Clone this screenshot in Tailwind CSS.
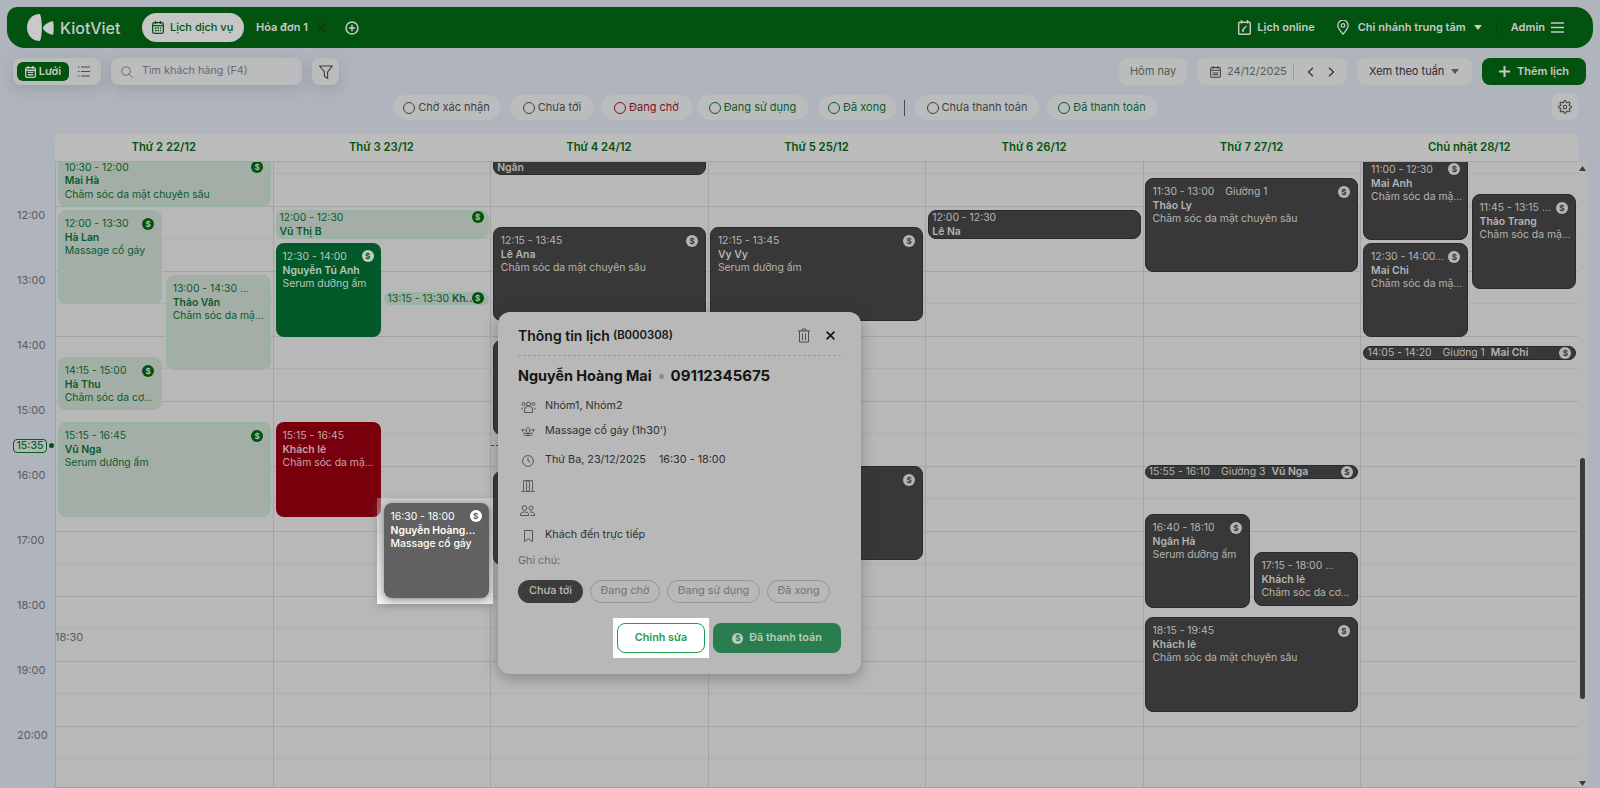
<!DOCTYPE html>
<html lang="vi">
<head>
<meta charset="utf-8">
<title>KiotViet</title>
<script src="https://cdn.jsdelivr.net/npm/@tailwindcss/browser@4"></script>
</head>
<body class="w-[1600px] h-[788px] overflow-hidden relative bg-[#b0b4bc] font-['Inter','Liberation_Sans',sans-serif] text-[#2e2e2e]">

<!-- top bar -->
<header class="mt-[7px] mx-[7px] h-[41px] rounded-[18px] rounded-tl-[10px] bg-[#02530f] flex items-center text-[#c6c8c6] font-semibold text-[11px] whitespace-nowrap">
  <svg class="ml-[20px] w-[27px] h-[27px]" viewBox="0 0 27 27" fill="#c9c9c9"><path d="M13 0C5 0 0 6 0 13.500S5 27 13 27C15.500 22 15.500 5 13 0z"/><path d="M26 7C22 8 16 11 16 14S22 20 26 21C27 17 27 11 26 7z"/></svg>
  <span class="ml-[6px] w-[60px] text-[16px] font-medium text-[#c9c9c9]">KiotViet</span>
  <div class="ml-[22px] w-[102px] h-[29px] rounded-full bg-[#c6c6c6] flex items-center pl-[10px] gap-[6px] text-[#02530f]">
    <svg class="w-[12px] h-[13px]" viewBox="0 0 12 13" fill="none" stroke="#02530f" stroke-width="1.3"><rect x=".7" y="1.7" width="10.6" height="10.6" rx="1.5"/><path d="M3.5 0v3M8.500 0v3M1 4.600h10"/><path d="M3 7h6M3 9.500h6" stroke-dasharray="1.500 1"/></svg>
    <span class="font-medium">Lịch dịch vụ</span>
  </div>
  <span class="ml-[12px] text-[#c9c9c9]">Hóa đơn 1</span>
  <svg class="ml-[9px] w-[9px] h-[9px]" viewBox="0 0 9 9" stroke="#0d3a16" stroke-width="1.200"><path d="M.5.5l8 8M8.500.5l-8 8"/></svg>
  <svg class="ml-[19px] w-[14px] h-[14px]" viewBox="0 0 14 14" fill="none" stroke="#c9c9c9" stroke-width="1.500"><circle cx="7" cy="7" r="6"/><path d="M7 3.800v6.400M3.800 7h6.400"/></svg>
  <div class="ml-auto flex items-center pr-[29px]">
    <svg class="w-[13px] h-[15px]" viewBox="0 0 13 15" fill="none" stroke="#c9c9c9" stroke-width="1.400"><rect x=".7" y="2.200" width="11.600" height="12" rx="1"/><path d="M3.500 0v3.500M9.500 0v3.500M4.500 10l4-4M4 11h2"/></svg>
    <span class="ml-[6px]">Lịch online</span>
    <svg class="ml-[22px] w-[12px] h-[15px]" viewBox="0 0 12 15" fill="none" stroke="#c9c9c9" stroke-width="1.300"><path d="M6 14.200C3 10.500 .8 8 .8 5.400a5.200 5.200 0 0 1 10.400 0C11.200 8 9 10.500 6 14.200z"/><circle cx="6" cy="5.400" r="1.800"/></svg>
    <span class="ml-[9px]">Chi nhánh trung tâm</span>
    <svg class="ml-[8px] w-[8px] h-[5px]" viewBox="0 0 8 5" fill="#c9c9c9"><path d="M0 0h8L4 5z"/></svg>
    <span class="ml-[14px] w-px h-[14px] bg-[#0f3d1a]"></span>
    <span class="ml-[14px]">Admin</span>
    <svg class="ml-[6px] w-[13px] h-[11px]" viewBox="0 0 13 11" stroke="#c9c9c9" stroke-width="1.500"><path d="M0 1h13M0 5.500h13M0 10h13"/></svg>
  </div>
</header>

<!-- toolbar -->
<div class="mt-[10px] ml-[13px] mr-[14px] h-[27px] flex items-center text-[11px] text-[#4c4c4c] whitespace-nowrap">
  <div class="w-[88px] h-[27px] rounded-lg bg-[#bbbcbe] flex items-center pl-[4px] shadow-[0_4px_14px_rgba(90,95,105,0.25)]">
    <div class="w-[52px] h-[19px] rounded-md bg-[#02530f] flex items-center justify-center gap-[3px] text-[#c9c9c9] font-semibold">
      <svg class="w-[11px] h-[12px]" viewBox="0 0 12 13" fill="none" stroke="#c9c9c9" stroke-width="1.400"><rect x=".7" y="1.700" width="10.600" height="10.600" rx="1.500"/><path d="M3.500 0v3M8.500 0v3M1 4.600h10M3 7h6M3 9.500h6"/></svg>
      <span>Lưới</span>
    </div>
    <svg class="ml-[9px] w-[12px] h-[11px]" viewBox="0 0 12 11" stroke="#4c4c4c" stroke-width="1.200"><path d="M3 1h9M3 5.500h9M3 10h9M0 1h1.500M0 5.500h1.500M0 10h1.500"/></svg>
  </div>
  <div class="ml-[10px] w-[191px] h-[27px] rounded-lg bg-[#bbbcbe] flex items-center pl-[10px] gap-[9px] text-[#6a6a6a] text-[10.800px] shadow-[0_4px_14px_rgba(90,95,105,0.25)]">
    <svg class="w-[12px] h-[12px]" viewBox="0 0 12 12" fill="none" stroke="#6a6a6a" stroke-width="1"><circle cx="5" cy="5" r="4.300"/><path d="M8.200 8.200L11.700 11.700"/></svg>
    <span>Tìm khách hàng (F4)</span>
  </div>
  <div class="ml-[10px] w-[27px] h-[27px] rounded-lg bg-[#bbbcbe] flex items-center justify-center shadow-[0_4px_14px_rgba(90,95,105,0.25)]">
    <svg class="w-[14px] h-[14px]" viewBox="0 0 14 14" fill="none" stroke="#3c3c3c" stroke-width="1.100"><path d="M.7 1h12.600L8.600 7v6.300L5.400 11.500V7z"/></svg>
  </div>
  <div class="ml-auto flex items-center">
    <div class="w-[68px] h-[27px] rounded-lg bg-[#bbbcbe] flex items-center justify-center text-[#4f6052]">Hôm nay</div>
    <div class="ml-[10px] w-[150px] h-[27px] rounded-lg bg-[#bbbcbe] flex items-center pl-[13px] text-[#4f6052]">
      <svg class="w-[11px] h-[12px]" viewBox="0 0 12 13" fill="none" stroke="#3c3c3c" stroke-width="1.100"><rect x=".7" y="1.700" width="10.600" height="10.600" rx="1.500"/><path d="M3.500 0v3M8.500 0v3M1 4.600h10M3 7.500h6M3 9.500h6"/></svg>
      <span class="ml-[6px]">24/12/2025</span>
      <span class="ml-[6px] w-px h-[16px] bg-[#9a9a9a]"></span>
      <svg class="ml-[13px] w-[7px] h-[10px]" viewBox="0 0 7 10" fill="none" stroke="#3c3c3c" stroke-width="1.400"><path d="M6 .7L1.500 5 6 9.300"/></svg>
      <svg class="ml-[14px] w-[7px] h-[10px]" viewBox="0 0 7 10" fill="none" stroke="#3c3c3c" stroke-width="1.400"><path d="M1 .7L5.500 5 1 9.300"/></svg>
    </div>
    <div class="ml-[10px] w-[115px] h-[27px] rounded-lg bg-[#bbbcbe] flex items-center pl-[12px] text-[#2a2a2a]">
      <span>Xem theo tuần</span>
      <svg class="ml-[7px] w-[8px] h-[5px]" viewBox="0 0 8 5" fill="#555"><path d="M0 0h8L4 5z"/></svg>
    </div>
    <div class="ml-[10px] w-[104px] h-[27px] rounded-lg bg-[#02530f] flex items-center justify-center gap-[7px] text-[#c9c9c9] font-semibold text-[11px]">
      <svg class="w-[11px] h-[11px]" viewBox="0 0 11 11" stroke="#c9c9c9" stroke-width="2"><path d="M5.500 0v11M0 5.500h11"/></svg>
      <span>Thêm lịch</span>
    </div>
  </div>
</div>

<!-- status filters -->
<div class="mt-[8px] h-[27px] flex items-end text-[11px] whitespace-nowrap">
  <div class="ml-[393px] w-[107px] h-[25px] rounded-full bg-[#bbbcbe] flex items-center justify-center gap-[3px] text-[#3f3f3f]"><span class="w-[12px] h-[12px] rounded-full border border-[#3f3f3f]"></span>Chờ xác nhận</div>
  <div class="ml-[10px] w-[84px] h-[25px] rounded-full bg-[#bbbcbe] flex items-center justify-center gap-[3px] text-[#3f3f3f]"><span class="w-[12px] h-[12px] rounded-full border border-[#3f3f3f]"></span>Chưa tới</div>
  <div class="ml-[7px] w-[91px] h-[25px] rounded-full bg-[#bbbcbe] flex items-center justify-center gap-[3px] text-[#7a1020]"><span class="w-[12px] h-[12px] rounded-full border border-[#7a1020]"></span>Đang chờ</div>
  <div class="ml-[5px] w-[111px] h-[25px] rounded-full bg-[#bbbcbe] flex items-center justify-center gap-[3px] text-[#0b5a2c]"><span class="w-[12px] h-[12px] rounded-full border border-[#0b5a2c]"></span>Đang sử dụng</div>
  <div class="ml-[10px] w-[78px] h-[25px] rounded-full bg-[#bbbcbe] flex items-center justify-center gap-[3px] text-[#0b5a2c]"><span class="w-[12px] h-[12px] rounded-full border border-[#0b5a2c]"></span>Đã xong</div>
  <span class="ml-[8px] mb-[4px] w-px h-[16px] bg-[#4c4c4c]"></span>
  <div class="ml-[10px] w-[124px] h-[25px] rounded-full bg-[#bbbcbe] flex items-center justify-center gap-[3px] text-[#3f3f3f]"><span class="w-[12px] h-[12px] rounded-full border border-[#3f3f3f]"></span>Chưa thanh toán</div>
  <div class="ml-[8px] w-[110px] h-[25px] rounded-full bg-[#bbbcbe] flex items-center justify-center gap-[3px] text-[#0b5a2c]"><span class="w-[12px] h-[12px] rounded-full border border-[#0b5a2c]"></span>Đã thanh toán</div>
  <div class="ml-auto mr-[22px] w-[26px] h-[27px] rounded-lg bg-[#bbbcbe] flex items-center justify-center">
    <svg class="w-[14px] h-[14px]" viewBox="0 0 24 24" fill="none" stroke="#3c3c3c" stroke-width="1.800"><circle cx="12" cy="12" r="3"/><path d="M19.400 15a1.650 1.650 0 0 0 .33 1.820l.06.06a2 2 0 1 1-2.830 2.830l-.06-.06a1.650 1.650 0 0 0-2.820 1.170V21a2 2 0 1 1-4 0v-.09a1.650 1.650 0 0 0-2.900-1.170l-.06.06a2 2 0 1 1-2.830-2.830l.06-.06A1.650 1.650 0 0 0 3.090 14H3a2 2 0 1 1 0-4h.09a1.650 1.650 0 0 0 1.170-2.900l-.06-.06A2 2 0 1 1 7.030 4.210l.06.06A1.650 1.650 0 0 0 10 3.090V3a2 2 0 1 1 4 0v.09a1.650 1.650 0 0 0 2.820 1.170l.06-.06a2 2 0 1 1 2.830 2.830l-.06.06A1.650 1.650 0 0 0 20.910 10H21a2 2 0 1 1 0 4h-.09a1.650 1.650 0 0 0-1.510 1z"/></svg>
  </div>
</div>

<!-- day headings -->
<div class="mt-[14px] ml-[55px] w-[1523px] h-[28px] rounded-t-md bg-[#bcbcbc] border-b border-[#a4a4a4] grid grid-cols-7 text-[11.300px] font-semibold text-[#02530f] text-center leading-[26px]">
  <div>Thứ 2 22/12</div><div>Thứ 3 23/12</div><div>Thứ 4 24/12</div><div>Thứ 5 25/12</div><div>Thứ 6 26/12</div><div>Thứ 7 27/12</div><div>Chủ nhật 28/12</div>
</div>

<!-- calendar -->
<div class="flex h-[626px] text-[10.400px] leading-[13.500px] whitespace-nowrap">
  <!-- hours -->
  <div class="relative w-[55px] shrink-0 text-[#5c5c5c] text-[11px]">
    <div class="pl-[17px] pt-[47px] flex flex-col">
      <div class="h-[65px]">12:00</div><div class="h-[65px]">13:00</div><div class="h-[65px]">14:00</div><div class="h-[65px]">15:00</div><div class="h-[65px]">16:00</div><div class="h-[65px]">17:00</div><div class="h-[65px]">18:00</div><div class="h-[65px]">19:00</div><div class="h-[65px]">20:00</div>
    </div>
    <div class="absolute left-[13px] top-[277px] w-[34px] h-[14px] rounded-[4px] border border-[#0b5a2c] bg-[#b0bab4] text-[#0b5a2c] font-medium text-[10.500px] text-center leading-[12px]">15:35</div>
    <div class="absolute left-[49px] top-[281px] w-[5px] h-[5px] rounded-full bg-[#02530f]"></div>
  </div>

  <!-- body -->
  <div class="relative w-[1532px] bg-[#b8b8b8] overflow-hidden border-b border-[#a4a4a4]">
    <!-- lines -->
    <div class="absolute left-0 top-0 w-[1523px] flex flex-col">
      <div class="h-[12px] border-b border-dotted border-[#a4a4a4]"></div>
      <div class="h-[32.500px] border-b border-[#a4a4a4]"></div>
      <div class="h-[32.500px] border-b border-dotted border-[#a4a4a4]"></div>
      <div class="h-[32.500px] border-b border-[#a4a4a4]"></div>
      <div class="h-[32.500px] border-b border-dotted border-[#a4a4a4]"></div>
      <div class="h-[32.500px] border-b border-[#a4a4a4]"></div>
      <div class="h-[32.500px] border-b border-dotted border-[#a4a4a4]"></div>
      <div class="h-[32.500px] border-b border-[#a4a4a4]"></div>
      <div class="h-[32.500px] border-b border-dotted border-[#a4a4a4]"></div>
      <div class="h-[32.500px] border-b border-[#a4a4a4]"></div>
      <div class="h-[32.500px] border-b border-dotted border-[#a4a4a4]"></div>
      <div class="h-[32.500px] border-b border-[#a4a4a4]"></div>
      <div class="h-[32.500px] border-b border-dotted border-[#a4a4a4]"></div>
      <div class="h-[32.500px] border-b border-[#a4a4a4]"></div>
      <div class="h-[32.500px] border-b border-dotted border-[#a4a4a4]"></div>
      <div class="h-[32.500px] border-b border-[#a4a4a4]"></div>
      <div class="h-[32.500px] border-b border-dotted border-[#a4a4a4]"></div>
      <div class="h-[32.500px] border-b border-[#a4a4a4]"></div>
      <div class="h-[32.500px] border-b border-dotted border-[#a4a4a4]"></div>
    </div>
    <span class="absolute left-0 top-[469px] text-[11px] text-[#5c5c5c]">18:30</span>
    <!-- scrollbar -->
    <div class="absolute left-[1523px] top-0 w-[9px] h-full bg-[#b8b8b8]">
      <svg class="absolute left-[1px] top-[4px] w-[7px] h-[5px]" viewBox="0 0 7 5" fill="#3a3a3a"><path d="M3.500 0L7 5H0z"/></svg>
      <div class="absolute left-[2px] top-[296px] w-[5px] h-[241px] rounded bg-[#3a3a3a]"></div>
      <svg class="absolute left-[1px] top-[619px] w-[7px] h-[5px]" viewBox="0 0 7 5" fill="#3a3a3a"><path d="M0 0h7L3.500 5z"/></svg>
    </div>

    <!-- columns -->
    <div class="absolute left-0 top-0 w-[1523px] h-full grid grid-cols-7">

      <!-- Mon -->
      <div class="relative border-l border-[#a4a4a4]">
        <div class="absolute left-[2px] top-[-9px] w-[213px] h-[54px] rounded-lg border border-[#96b5a3] bg-[#a3afa6] text-[#0b5a2c] pl-[5.700px] pt-[6.500px]">10:30 - 12:00<p class="font-semibold">Mai Hà</p><p>Chăm sóc da mặt chuyên sâu</p><span class="absolute right-[7px] top-[7px] w-[12px] h-[12px] rounded-full bg-[#02530f] text-[#b0c0b4] text-[8px] leading-[12px] text-center font-bold">$</span></div>
        <div class="absolute left-[2px] top-[48px] w-[104px] h-[94px] rounded-lg border border-[#96b5a3] bg-[#a3afa6] text-[#0b5a2c] pl-[5.700px] pt-[6px]">12:00 - 13:30<p class="font-semibold">Hà Lan</p><p>Massage cổ gáy</p><span class="absolute right-[7px] top-[7px] w-[12px] h-[12px] rounded-full bg-[#02530f] text-[#b0c0b4] text-[8px] leading-[12px] text-center font-bold">$</span></div>
        <div class="absolute left-[110px] top-[113px] w-[105px] h-[95px] rounded-lg border border-[#96b5a3] bg-[#a3afa6] text-[#0b5a2c] pl-[5.700px] pt-[6px]">13:00 - 14:30 ...<p class="font-semibold">Thảo Vân</p><p>Chăm sóc da mặ...</p></div>
        <div class="absolute left-[2px] top-[195px] w-[104px] h-[53px] rounded-lg border border-[#96b5a3] bg-[#a3afa6] text-[#0b5a2c] pl-[5.700px] pt-[6px]">14:15 - 15:00<p class="font-semibold">Hà Thu</p><p>Chăm sóc da cơ...</p><span class="absolute right-[7px] top-[7px] w-[12px] h-[12px] rounded-full bg-[#02530f] text-[#b0c0b4] text-[8px] leading-[12px] text-center font-bold">$</span></div>
        <div class="absolute left-[2px] top-[260px] w-[213px] h-[95px] rounded-lg border border-[#96b5a3] bg-[#a3afa6] text-[#0b5a2c] pl-[5.700px] pt-[6px]">15:15 - 16:45<p class="font-semibold">Vũ Nga</p><p>Serum dưỡng ấm</p><span class="absolute right-[7px] top-[7px] w-[12px] h-[12px] rounded-full bg-[#02530f] text-[#b0c0b4] text-[8px] leading-[12px] text-center font-bold">$</span></div>
      </div>

      <!-- Tue -->
      <div class="relative border-l border-[#a4a4a4]">
        <div class="absolute left-[2px] top-[48px] w-[213px] h-[29px] rounded-lg border border-[#96b5a3] bg-[#a3afa6] text-[#0b5a2c] pl-[3px] pt-0">12:00 - 12:30<p class="font-semibold">Vũ Thị B</p><span class="absolute right-[4px] top-[0px] w-[12px] h-[12px] rounded-full bg-[#02530f] text-[#b0c0b4] text-[8px] leading-[12px] text-center font-bold">$</span></div>
        <div class="absolute left-[2px] top-[81px] w-[105px] h-[94px] rounded-lg bg-[#025a2b] text-[#b8c6bc] pl-[7px] pt-[7px]">12:30 - 14:00<p class="font-semibold">Nguyễn Tú Anh</p><p>Serum dưỡng ấm</p><span class="absolute right-[7px] top-[7px] w-[12px] h-[12px] rounded-full bg-[#c0cbc4] text-[#025a2b] text-[8px] leading-[12px] text-center font-bold">$</span></div>
        <div class="absolute left-[110px] top-[130px] w-[105px] h-[13px] rounded-full border border-[#96b5a3] bg-[#a3afa6] text-[#0b5a2c] pl-[3px] leading-[11px]">13:15 - 13:30 <span class="font-semibold">Kh...</span><span class="absolute right-[4px] top-[-1px] w-[12px] h-[12px] rounded-full bg-[#02530f] text-[#b0c0b4] text-[8px] leading-[12px] text-center font-bold">$</span></div>
        <div class="absolute left-[2px] top-[260px] w-[105px] h-[95px] rounded-lg bg-[#78000d] text-[#c4a4a8] pl-[7px] pt-[7px]">15:15 - 16:45<p class="font-semibold">Khách lẻ</p><p>Chăm sóc da mặ...</p></div>
        <!-- spotlight -->
        <div class="absolute z-10 left-[103px] top-[336px] w-[116px] h-[106px] bg-linear-to-b from-white/30 to-white/85 shadow-[0_3px_8px_rgba(110,110,110,0.35)]">
          <div class="absolute left-[7px] top-[5px] w-[105px] h-[95px] rounded-lg bg-[#616161] text-white pl-[7px] pt-[7px] shadow-[0_2px_8px_rgba(0,0,0,0.45)]">16:30 - 18:00<p class="font-semibold">Nguyễn Hoàng...</p><p class="font-medium">Massage cổ gáy</p><span class="absolute right-[7px] top-[7px] w-[12px] h-[12px] rounded-full bg-white text-[#616161] text-[8px] leading-[12px] text-center font-bold">$</span></div>
        </div>
      </div>

      <!-- Wed -->
      <div class="relative border-l border-[#a4a4a4]">
        <div class="absolute left-[2px] top-[-30px] w-[213px] h-[43px] rounded-lg border border-[#2a2a2a] bg-[#383838] text-[#b4b4b4] pl-[3px] font-semibold flex items-end">Ngân</div>
        <div class="absolute left-[2px] top-[65px] w-[213px] h-[94px] rounded-lg border border-[#2a2a2a] bg-[#383838] text-[#b4b4b4] pl-[6.700px] pt-[6px]">12:15 - 13:45<p class="font-semibold">Lê Ana</p><p>Chăm sóc da mặt chuyên sâu</p><span class="absolute right-[7px] top-[7px] w-[12px] h-[12px] rounded-full bg-[#b4b4b4] text-[#383838] text-[8px] leading-[12px] text-center font-bold">$</span></div>
        <div class="absolute left-[2px] top-[178px] w-[213px] h-[95px] rounded-lg border border-[#2a2a2a] bg-[#383838]"></div>
        <div class="absolute left-0 top-[283px] w-full border-t border-dashed border-[#0b5a2c]"></div>
        <div class="absolute left-[2px] top-[309px] w-[213px] h-[94px] rounded-lg border border-[#2a2a2a] bg-[#383838]"></div>
      </div>

      <!-- Thu -->
      <div class="relative border-l border-[#a4a4a4]">
        <div class="absolute left-[1.500px] top-[65px] w-[213px] h-[94px] rounded-lg border border-[#2a2a2a] bg-[#383838] text-[#b4b4b4] pl-[6.700px] pt-[6px]">12:15 - 13:45<p class="font-semibold">Vy Vy</p><p>Serum dưỡng ấm</p><span class="absolute right-[7px] top-[7px] w-[12px] h-[12px] rounded-full bg-[#b4b4b4] text-[#383838] text-[8px] leading-[12px] text-center font-bold">$</span></div>
        <div class="absolute left-[1.500px] top-[304px] w-[213px] h-[94px] rounded-lg border border-[#2a2a2a] bg-[#383838]"><span class="absolute right-[7px] top-[7px] w-[12px] h-[12px] rounded-full bg-[#b4b4b4] text-[#383838] text-[8px] leading-[12px] text-center font-bold">$</span></div>
      </div>

      <!-- Fri -->
      <div class="relative border-l border-[#a4a4a4]">
        <div class="absolute left-[2px] top-[48px] w-[213px] h-[29px] rounded-lg border border-[#2a2a2a] bg-[#383838] text-[#b4b4b4] pl-[3px]">12:00 - 12:30<p class="font-semibold">Lê Na</p></div>
      </div>

      <!-- Sat -->
      <div class="relative border-l border-[#a4a4a4]">
        <div class="absolute left-[1px] top-[16px] w-[213px] h-[94px] rounded-lg border border-[#2a2a2a] bg-[#383838] text-[#b4b4b4] pl-[6.700px] pt-[6px]">11:30 - 13:00 <span class="ml-[8px]">Giường 1</span><p class="font-semibold">Thảo Ly</p><p>Chăm sóc da mặt chuyên sâu</p><span class="absolute right-[7px] top-[7px] w-[12px] h-[12px] rounded-full bg-[#b4b4b4] text-[#383838] text-[8px] leading-[12px] text-center font-bold">$</span></div>
        <div class="absolute left-[1px] top-[303px] w-[213px] h-[14px] rounded-full border border-[#2a2a2a] bg-[#383838] text-[#b4b4b4] pl-[3px] leading-[12px]">15:55 - 16:10 <span class="ml-[8px]">Giường 3</span><span class="ml-[6px] font-semibold">Vũ Nga</span><span class="absolute right-[4px] top-0 w-[12px] h-[12px] rounded-full bg-[#b4b4b4] text-[#383838] text-[8px] leading-[12px] text-center font-bold">$</span></div>
        <div class="absolute left-[1px] top-[352px] w-[105px] h-[94px] rounded-lg border border-[#2a2a2a] bg-[#383838] text-[#b4b4b4] pl-[6.700px] pt-[6px]">16:40 - 18:10<p class="font-semibold">Ngân Hà</p><p>Serum dưỡng ấm</p><span class="absolute right-[7px] top-[7px] w-[12px] h-[12px] rounded-full bg-[#b4b4b4] text-[#383838] text-[8px] leading-[12px] text-center font-bold">$</span></div>
        <div class="absolute left-[110px] top-[390px] w-[104px] h-[54px] rounded-lg border border-[#2a2a2a] bg-[#383838] text-[#b4b4b4] pl-[6.700px] pt-[6px]">17:15 - 18:00 ...<p class="font-semibold">Khách lẻ</p><p>Chăm sóc da cơ...</p></div>
        <div class="absolute left-[1px] top-[455px] w-[213px] h-[95px] rounded-lg border border-[#2a2a2a] bg-[#383838] text-[#b4b4b4] pl-[6.700px] pt-[6px]">18:15 - 19:45<p class="font-semibold">Khách lẻ</p><p>Chăm sóc da mặt chuyên sâu</p><span class="absolute right-[7px] top-[7px] w-[12px] h-[12px] rounded-full bg-[#b4b4b4] text-[#383838] text-[8px] leading-[12px] text-center font-bold">$</span></div>
      </div>

      <!-- Sun -->
      <div class="relative border-l border-[#a4a4a4]">
        <div class="absolute left-[2px] top-[-9px] w-[105px] h-[87px] rounded-lg border border-[#2a2a2a] bg-[#383838] text-[#b4b4b4] pl-[6.700px] pt-[9px]">11:00 - 12:30<p class="font-semibold">Mai Anh</p><p>Chăm sóc da mặ...</p><span class="absolute right-[7px] top-[9px] w-[12px] h-[12px] rounded-full bg-[#b4b4b4] text-[#383838] text-[8px] leading-[12px] text-center font-bold">$</span></div>
        <div class="absolute left-[2px] top-[81px] w-[105px] h-[94px] rounded-lg border border-[#2a2a2a] bg-[#383838] text-[#b4b4b4] pl-[6.700px] pt-[6px]">12:30 - 14:00...<p class="font-semibold">Mai Chi</p><p>Chăm sóc da mặ...</p><span class="absolute right-[7px] top-[7px] w-[12px] h-[12px] rounded-full bg-[#b4b4b4] text-[#383838] text-[8px] leading-[12px] text-center font-bold">$</span></div>
        <div class="absolute left-[110.500px] top-[32px] w-[104px] h-[95px] rounded-lg border border-[#2a2a2a] bg-[#383838] text-[#b4b4b4] pl-[6.700px] pt-[6px]">11:45 - 13:15 ...<p class="font-semibold">Thảo Trang</p><p>Chăm sóc da mặ...</p><span class="absolute right-[7px] top-[7px] w-[12px] h-[12px] rounded-full bg-[#b4b4b4] text-[#383838] text-[8px] leading-[12px] text-center font-bold">$</span></div>
        <div class="absolute left-[2px] top-[184px] w-[213px] h-[14px] rounded-full border border-[#2a2a2a] bg-[#383838] text-[#b4b4b4] pl-[3px] leading-[12px]">14:05 - 14:20 <span class="ml-[8px]">Giường 1</span><span class="ml-[6px] font-semibold">Mai Chi</span><span class="absolute right-[4px] top-0 w-[12px] h-[12px] rounded-full bg-[#b4b4b4] text-[#383838] text-[8px] leading-[12px] text-center font-bold">$</span></div>
      </div>
    </div>
  </div>
</div>

<!-- booking dialog -->
<div class="absolute z-20 left-[498px] top-[312px] w-[363px] h-[362px] rounded-xl bg-[#b8b8b8] shadow-[0_4px_14px_rgba(40,40,40,0.35)] px-[20px] text-[10.800px] text-[#303030] whitespace-nowrap">
  <div class="h-[44px] pt-[3px] border-b border-dashed border-[#999] flex items-center text-[#151515] font-semibold">
    <span class="text-[14px]">Thông tin lịch</span>
    <span class="ml-[3px] text-[11.300px]">(B000308)</span>
    <svg class="ml-auto mr-[16px] w-[12px] h-[15px]" viewBox="0 0 12 14" fill="none" stroke="#4a4a4a" stroke-width="1"><path d="M0 2.500h12M4 2.500V.6h4v1.900M1.500 2.500v11h9v-11M4.500 5v6.500M7.500 5v6.500"/></svg>
    <svg class="mr-[6px] w-[9px] h-[9px]" viewBox="0 0 9 9" stroke="#151515" stroke-width="1.600"><path d="M.6.6l7.800 7.800M8.400.6L.6 8.400"/></svg>
  </div>
  <div class="mt-[10px] h-[20px] flex items-center font-bold text-[#151515] leading-[20px]">
    <span class="text-[14.400px]">Nguyễn Hoàng Mai</span><span class="ml-[7px] w-[5px] h-[5px] rounded-full bg-[#8c8c8c]"></span><span class="ml-[7px] text-[15px]">09112345675</span>
  </div>
  <div class="mt-[8px] h-[25px] flex items-center">
    <svg class="w-[15px] h-[12px] mr-[9px] ml-[3px]" viewBox="0 0 15 12" fill="none" stroke="#4a4a4a" stroke-width=".9"><circle cx="7.500" cy="3" r="2"/><circle cx="2.500" cy="3" r="1.500"/><circle cx="12.500" cy="3" r="1.500"/><path d="M3.500 11.500V9a4 4 0 0 1 8 0v2.500zM.5 8.500a2 2 0 0 1 2-1.500M14.500 8.500a2 2 0 0 0-2-1.500"/></svg>
    <span>Nhóm1, Nhóm2</span>
  </div>
  <div class="h-[25px] flex items-center">
    <svg class="w-[14px] h-[11px] mr-[10px] ml-[3px]" viewBox="0 0 14 11" fill="none" stroke="#4a4a4a" stroke-width=".9"><path d="M7 .8C5 2.500 5 6 7 8c2-2 2-5.500 0-7.200zM7 8C4 8 1.500 6 .8 3.500 3 3.500 4.500 4 5.300 5M7 8c3 0 5.500-2 6.200-4.500-2.200 0-3.700.5-4.500 1.500M2.500 8.500C4 10.200 10 10.200 11.500 8.500"/></svg>
    <span>Massage cổ gáy (1h30')</span>
  </div>
  <div class="mt-[4px] h-[25px] flex items-center">
    <svg class="w-[12px] h-[12px] mr-[11px] ml-[4px]" viewBox="0 0 12 12" fill="none" stroke="#4a4a4a" stroke-width=".9"><circle cx="6" cy="6" r="5.400"/><path d="M6 2.800V6l2.200 1.500"/></svg>
    <span>Thứ Ba, 23/12/2025</span><span class="ml-[13px]">16:30 - 18:00</span>
  </div>
  <div class="h-[25px] flex items-center">
    <svg class="w-[14px] h-[12px] ml-[3px]" viewBox="0 0 14 12" fill="none" stroke="#4a4a4a" stroke-width=".8"><path d="M0 11.600h14M2.500 11.600V.6h9v11M5.500.6l3 1.200v8.800l-3 1zM7.200 6.500v.8"/></svg>
  </div>
  <div class="h-[25px] flex items-center">
    <svg class="w-[15px] h-[11px] ml-[2px]" viewBox="0 0 15 11" fill="none" stroke="#4a4a4a" stroke-width=".9"><circle cx="4.500" cy="3" r="2.300"/><circle cx="11" cy="3" r="2"/><path d="M.5 10.500V9a3 3 0 0 1 3-2h2a3 3 0 0 1 3 2v1.500zM10 7h1.500a3 3 0 0 1 3 2v1.500h-4"/></svg>
  </div>
  <div class="h-[25px] flex items-center">
    <svg class="w-[9px] h-[12px] mr-[12px] ml-[6px]" viewBox="0 0 9 12" fill="none" stroke="#4a4a4a" stroke-width=".9"><path d="M.5.5h8v11l-4-2.800-4 2.800z"/></svg>
    <span>Khách đến trực tiếp</span>
  </div>
  <p class="mt-[6px] h-[14px] leading-[14px] text-[#6a6a6a]">Ghi chú:</p>
  <div class="mt-[12px] flex gap-[7px] text-[#727272]">
    <span class="w-[65px] h-[23px] rounded-full bg-[#3c3c3c] text-[#bcbcbc] font-medium flex items-center justify-center">Chưa tới</span>
    <span class="w-[70px] h-[23px] rounded-full border border-[#959595] flex items-center justify-center">Đang chờ</span>
    <span class="w-[93px] h-[23px] rounded-full border border-[#959595] flex items-center justify-center">Đang sử dụng</span>
    <span class="w-[63px] h-[23px] rounded-full border border-[#959595] flex items-center justify-center">Đã xong</span>
  </div>
  <div class="mt-[15px] flex justify-end items-center gap-[4px]">
    <div class="w-[96px] h-[40px] bg-white px-[4px] py-[5px]">
      <div class="w-[88px] h-[30px] rounded-lg border border-[#1e9d50] bg-white text-[#1e9d50] font-semibold flex items-center justify-center">Chỉnh sửa</div>
    </div>
    <div class="w-[128px] h-[30px] rounded-lg bg-[#2a7d4f] text-[#b5cdbd] font-semibold flex items-center justify-center gap-[6px]">
      <span class="w-[11px] h-[11px] rounded-full bg-[#b5cdbd] text-[#2a7d4f] text-[8px] leading-[11px] text-center font-bold">$</span>
      <span>Đã thanh toán</span>
    </div>
  </div>
</div>

</body>
</html>
